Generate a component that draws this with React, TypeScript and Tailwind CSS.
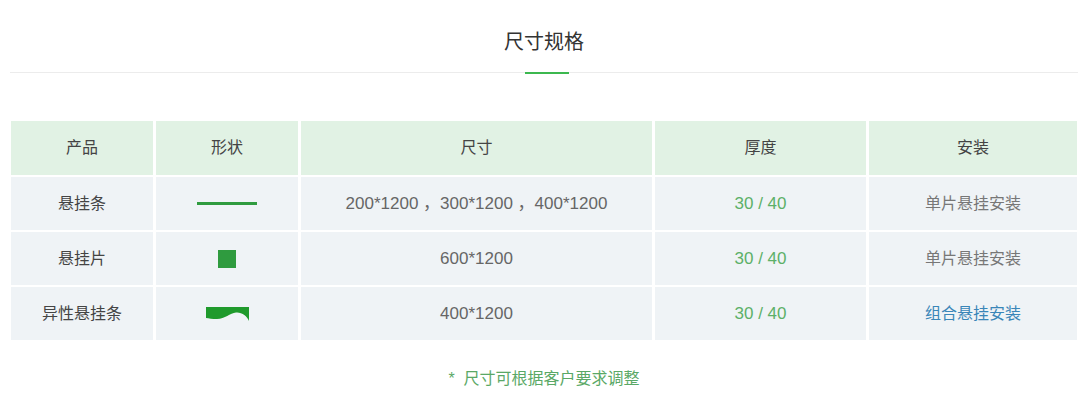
import React from "react";

const cell = "flex items-center justify-center";

const rows = [
  {
    name: "悬挂条",
    shape: <div className="w-[60px] h-[3px] bg-[#2f9b3f]" />,
    size: "200*1200 ，300*1200 ，400*1200",
    install: "单片悬挂安装",
    blue: false,
  },
  {
    name: "悬挂片",
    shape: <div className="w-[18px] h-[18px] bg-[#2f9b3f]" />,
    size: "600*1200",
    install: "单片悬挂安装",
    blue: false,
  },
  {
    name: "异性悬挂条",
    shape: (
      <svg width="43" height="14" viewBox="0 0 43 14">
        <path
          d="M0 0 H43 V14 C41 9 36 5 30 5.5 C24 6 19 12 11 12 C6 12 3 11.5 0 11 Z"
          fill="#1f9a2c"
        />
      </svg>
    ),
    size: "400*1200",
    install: "组合悬挂安装",
    blue: true,
  },
];

const App: React.FC = () => {
  return (
    <div
      className="w-[1088px] h-[398px] bg-white text-[16px] text-[#555]"
      style={{ fontFamily: '"Liberation Sans", "Noto Sans CJK SC", sans-serif' }}
    >
      <div className="pt-[29px] text-center text-[20px] text-[#333] leading-[26px]">尺寸规格</div>
      <div className="mx-[10px] mt-[17px] h-px bg-[#ececec] flex justify-center">
        <div className="w-[44px] h-[2px] bg-[#3cb84f] ml-[6px]" />
      </div>

      <div className="mx-[11px] mt-[48px] w-[1066px] grid grid-cols-[142px_142px_351px_211px_1fr] gap-x-[3px] gap-y-[2px]">
        {["产品", "形状", "尺寸", "厚度", "安装"].map((h) => (
          <div key={h} className={`${cell} h-[54px] bg-[#e1f2e4] text-[#444]`}>
            {h}
          </div>
        ))}
        {rows.map((r) => (
          <React.Fragment key={r.name}>
            <div className={`${cell} h-[53px] bg-[#eff3f6] text-[#444]`}>{r.name}</div>
            <div className={`${cell} h-[53px] bg-[#eff3f6]`}>{r.shape}</div>
            <div className={`${cell} h-[53px] bg-[#eff3f6] text-[#666] text-[17px]`}>{r.size}</div>
            <div className={`${cell} h-[53px] bg-[#eff3f6] text-[#5cb068] text-[17px]`}>30 / 40</div>
            <div className={`${cell} h-[53px] bg-[#eff3f6] ${r.blue ? "text-[#3a86b8]" : "text-[#777]"}`}>
              {r.install}
            </div>
          </React.Fragment>
        ))}
      </div>

      <div className="mt-[27px] text-center text-[#5aa866]">*&nbsp; 尺寸可根据客户要求调整</div>
    </div>
  );
};

export default App;
